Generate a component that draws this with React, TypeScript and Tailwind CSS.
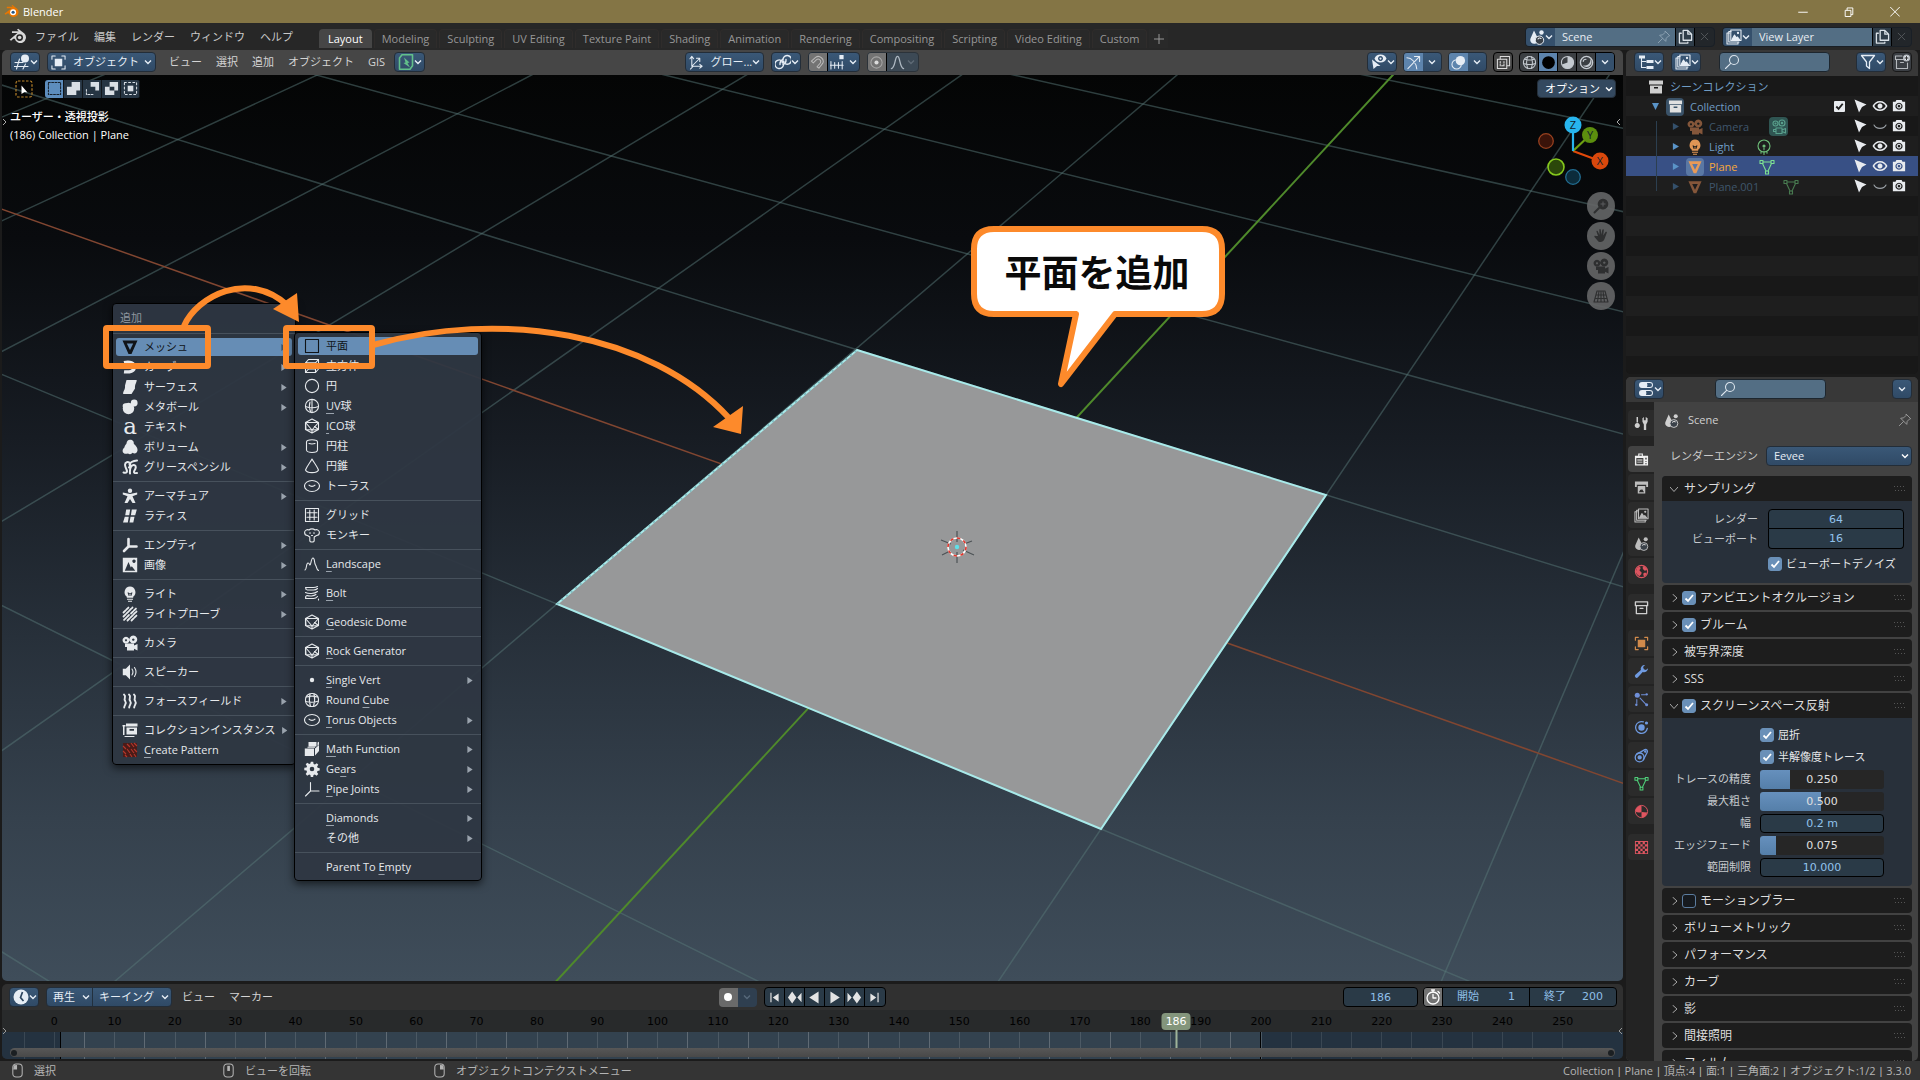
import React from "react";

type Kids = { children?: React.ReactNode };

/* ---------- icons (16 x 16 grid) ---------- */

const STROKE = { fill: "none", stroke: "currentColor", strokeWidth: 1.1, strokeLinejoin: "round", strokeLinecap: "round" } as const;

const ICONS: Record<string, React.ReactNode> = {
  mesh: <path fillRule="evenodd" d="M.5 1.500h15L9.500 15h-3zM4.800 4.500 8 11l3.200-6.500z" />,
  curve: <path d="M2 3.500c6-1.500 10.500.5 10.500 4.500S8 13.500 2 12.800" {...STROKE} strokeWidth={3.200} strokeLinecap="butt" />,
  surface: <path d="M4.500 1h10.200c0 3-2 4-1.700 8.500L9.500 15H1.200c-.5-3 2.300-4 1.800-8.500z" />,
  meta: <g><circle cx="6.500" cy="9.500" r="5.700" /><circle cx="12.200" cy="4" r="3.400" /><circle cx="3.500" cy="7" r="2.800" /></g>,
  text: <text x="8" y="15" fontSize="23" textAnchor="middle" fontFamily="DejaVu Serif, serif">a</text>,
  volume: <path d="M8 .8c3 0 4 2 3.800 4C13 6 15.800 8.500 15.500 11.500c-.5 3-3 3.500-5 2.300-1 1.500-3 1.800-4.500.6C3.500 15.500.6 14.500.6 12c0-2 1.200-3 1.800-3.500C2.800 6 4 5.500 4.500 4.500 4.700 2.500 6 .8 8 .8z" />,
  grease: <path d="M1.500 13.500c3.500 1 4-1 3-3C3 7.500 2 4 4.800 3.200 8 2.500 9 6 7 8.500M15 1.500c-3.500.3-6.500 1.500-7.500 4M8 14.500C7.500 10 9 5.500 12 6c3 .5 1.500 4 .5 5.500-1 1.700-.5 3 2.500 2.500" {...STROKE} strokeWidth={2} />,
  armature: <g><circle cx="8" cy="2.800" r="2.200" /><path d="M.8 4.500 8 6l7.200-1.500v2L10.500 8.200 13.500 15H10.500L8 11l-2.500 4h-3l3-6.800L.8 6.500z" /></g>,
  lattice: <path d="M4.200 1.500h4L7.200 7.200H3.200zM9.800 1.500h5L13.200 7.200H8.900zM2.800 8.800h4l-1 5.700H1zM8.500 8.800h4l-1.200 5.700H7.500z" />,
  empty: <path d="M6.500 2v7.500h8M6.500 9.500 2 14" {...STROKE} strokeWidth={2.600} />,
  image: <path fillRule="evenodd" d="M.8 .8h14.400v14.400H.8zM2.800 13.800h10.500L9.800 9.200l-1 1.200L6.500 5zM12 2.500a1.700 1.700 0 1 0 .01 0z" />,
  light: <g><path fillRule="evenodd" d="M8 .6a5.700 5.700 0 0 1 3.200 10.200v1H4.800v-1A5.700 5.700 0 0 1 8 .6zM5.500 6.500 6.700 10h.8V8h1v2h.8l1.200-3.500H9.500L8 7.500l-1.500-1z" /><path d="M5 12.800h6v1H5zM6 14.700h4v1H6z" /></g>,
  probe: <g><path d="M1.500 6.500 6.500 1.500M1.500 10.500 10.500 1.500M9 7.500 14.500 2M7 9 1.500 14.500M5.500 14.500 14.500 5.500M9.500 14.500 14.500 9.500" {...STROKE} strokeWidth={1.800} strokeDasharray="3 1" /></g>,
  camera: <g><path fillRule="evenodd" d="M4 1.800a3.400 3.400 0 1 0 .01 0zM4 4.300a1 1 0 1 1-.01 0zM11.300.6a3.900 3.900 0 1 0 .01 0zM11.300 3.400a1.200 1.200 0 1 1-.01 0z" /><path d="M3 8.500h9v2l3.500-1.500v6.500l-3.500-1.700v1.700h-7V12H3z" /></g>,
  speaker: <g><path d="M.8 4.800h3L8 .6v14.800L3.800 11.200h-3z" /><path d="M10 5c1.300 2 1.300 4 0 6M12.500 3.500c2 3 2 6 0 9" {...STROKE} /></g>,
  force: <path d="M2 1.500c3 2.500-1 4 1.200 6.500 2 2.500-1 4-1 6.500M7 1.500c3 2.500-1 4 1.200 6.500 2 2.500-1 4-1 6.500M12 1.500c3 2.500-1 4 1.200 6.500 2 2.500-1 4-1 6.500" {...STROKE} strokeWidth={1.900} />,
  instance: <g><path d="M.500 3h3v1.500h-1V13H1V4.500H.500zM4 1.500h11.500v3H4z" /><path fillRule="evenodd" d="M4.500 5.500H15v7H4.500zM7.500 7v1.800H12V7z" /><path d="M3 14.500h9" {...STROKE} /></g>,
  pattern: <g><rect x="1" y="1" width="14" height="14" fill="#4a1b18" /><path d="m1 4 3 3m1-5 3 3m1-4 3 4m0-4 3 3M1 9l3 3m1-5 3 4m1-4 3 4m0-4 3 3M3 13l2 2m3-3 2 3m2-3 2 3" stroke="#b5372b" strokeWidth="1.100" fill="none" /></g>,
  plane: <rect x="1.500" y="1.500" width="13" height="13" {...STROKE} />,
  cube: <path d="M1.500 4.800h10v9.700h-10zM1.500 4.800l3-3.300h10v9.500l-3 3.500M11.500 4.800l3-3.300M4.500 5v6h6M4.500 11l-3 3.500" {...STROKE} />,
  circle: <circle cx="8" cy="8" r="6.600" {...STROKE} />,
  uv: <g {...STROKE}><circle cx="8" cy="8" r="6.600" /><path d="M1.500 8.500c4 1.500 9 1.500 13 0M8 1.500v13M6 4c-1 3-1 6 .5 9.500" /></g>,
  ico: <path d="M8 1 14.500 4.500v7L8 15l-6.500-3.500v-7zM1.500 4.500h13L8 12 1.500 4.500 2 11M14.500 11.500 8 12l-6.500-.5M10.500 8.500l4 3M8 12v3" {...STROKE} />,
  cylinder: <path d="M2.500 4c0-3 11-3 11 0v8c0 3.300-11 3.300-11 0zM5 5.500c2 .6 4 .6 6 0" {...STROKE} />,
  cone: <path d="M8 1C6.500 4 3 8 1.500 12c1.500 3.500 11.500 3.500 13 0C13 8 9.500 4 8 1z" {...STROKE} />,
  torus: <g {...STROKE}><ellipse cx="8" cy="8" rx="7.500" ry="5.500" /><path d="M5 7.200c1.500 1.600 4.500 1.600 6 0" /></g>,
  grid: <path d="M1.500 1.500h13v13h-13zM5.800 3v10M10.200 3v10M3 5.800h10M3 10.200h10" {...STROKE} />,
  monkey: <path d="M5 3C3 2 .6 3.500.6 5.500S2 8.500 3.500 8.500L5.800 10v3.500c0 2 4.400 2 4.400 0V10l2.300-1.500c1.500 0 2.900-1 2.900-3S13 2 11 3C9.500 1.500 6.500 1.500 5 3zM5.500 6h1M9.500 6h1M7.500 8.500h1" {...STROKE} />,
  landscape: <path d="M1 14c2-1 1-7 3-7s1 2 2 2 1-7 3-7 1 5 2.500 7 .5 4 3 5.500" {...STROKE} />,
  bolt: <path d="M1.500 2.500h8c2 0 3-.5 4-1M3.500 5h6c2 0 3-.5 4-1.500M3.500 5c-2.500-.5-2.500-2 0-2.500M1.500 7.500c3 1.500 9 1.500 12-1M1.500 13.500h8c2 0 3-.8 4-2M3 10.500c2.500 1 7 .5 9-1M3 10.500c-2 1-2 2.500 0 3M14.500 14v1" {...STROKE} />,
  dot: <circle cx="8" cy="8" r="2.200" />,
  round: <g {...STROKE}><rect x="1.500" y="1.500" width="13" height="13" rx="6" /><path d="M1.500 9.500c4 1 9 1 13-.5M10 1.700c1 4 1 8-.5 12.800M6 2C5 6 5 10 6.500 14.400M2.500 5c3-1 8-1 11 0" /></g>,
  math: <path fillRule="evenodd" d="M4.500 1h8v4.500h-8zM.8 7.500H10V15H.8zM3.500 5.800h7.500v1H3.500zM11 7.500l4-3.500v6L11 14.500zM13.500 1.500 15 .8v2.700l-1.500 1.500z" />,
  gear: <path fillRule="evenodd" d="M6.800.8h2.400l.4 2.200 1.300.5 1.900-1.300 1.500 1.500-1.200 1.900.5 1.200 2.100.4v2.400l-2.200.4-.5 1.200 1.300 1.900-1.700 1.600-1.800-1.200-1.300.5-.4 2.200H6.800l-.4-2.200-1.300-.5-1.900 1.200-1.500-1.600L3 10.900l-.5-1.300-2.200-.4V6.800l2.200-.4L3 5.200 1.700 3.300l1.600-1.600 1.900 1.300 1.200-.5zM8 5.700A2.300 2.300 0 1 0 8 10.300 2.300 2.300 0 1 0 8 5.700z" />,
  axis: <path d="M6.500 1.500V10H15M6.500 10 1.500 15" {...STROKE} />,
  scene: <g><path d="M5 1.500 8.500 8.500A4 4 0 1 1 1.500 9.500z" /><circle cx="12.500" cy="3.500" r="2.200" /><circle cx="10.500" cy="11.200" r="4.200" fill="#3a4149" stroke="currentColor" /><path d="M9 10c.5-1 2-1.500 3-.5" {...STROKE} /></g>,
  layers: <g {...STROKE}><path d="M3.500 4H1v11h11v-2M5 2.500H2.800v10.500H13" /><rect x="4.800" y="1" width="10.200" height="10.500" /><path d="m6 10.500 2.500-4.500 2 3 1-1 2 2.500z" fill="currentColor" /><circle cx="12" cy="4" r=".6" fill="currentColor" /></g>,
  copy: <path d="M5.500 1.500h5l4 4v6.500h-9zM10.500 1.500v4h4M3.500 4.500h-2v10.500h9v-1" {...STROKE} strokeWidth={1.400} />,
  pin: <path d="m9.500 1.500 5 5-1.500.500-2.500 2.500-.500 3.500-7-7L6.500 5.500 9 3zM6.300 9.700 1.500 14.500" {...STROKE} />,
  search: <g {...STROKE}><circle cx="10" cy="6" r="4.500" /><path d="m6.700 9.300-5.200 5.200" /></g>,
  filter: <path d="M1.500 1.500h13L9.500 8v6.500l-3-2.500V8z" {...STROKE} strokeWidth={1.300} />,
  tree: <g><path d="M1 1.500h6v3H1zM8.500 6h7v3h-7zM8.500 12h7v3h-7z" /><path d="M3.500 4v9.500H8M3.500 7.500H8" {...STROKE} /></g>,
  newcol: <g {...STROKE}><path d="M8 2H1.500v3.500H10M2.500 6v8.500h11V9M6.500 8.500h3" /><circle cx="12.500" cy="4" r="3" fill="#dfe6ee" /><path d="M11 4h3M12.500 2.500v3" stroke="#333" /></g>,
  box: <path fillRule="evenodd" d="M1 1.500h14v4H1zM2 6.500h12v8H2zM6 8v1.500h4V8z" />,
  boxline: <path d="M1.500 2h13v4h-13zM2.500 6v8.500h11V6M6.500 9h3" {...STROKE} strokeWidth={1.400} />,
  pointer: <path d="m2.500 1.500 12 5L10 9l-3 5.500z" />,
  eye: <path fillRule="evenodd" d="M8 3c3.500 0 6 2 7.500 5-1.500 3-4 5-7.500 5S2 11 .5 8C2 5 4.500 3 8 3zm0 1.500C5.500 4.500 3.500 6 2.300 8c1.200 2 3.200 3.500 5.700 3.500S12.500 10 13.700 8C12.500 6 10.500 4.500 8 4.500zM8 5.500a2.500 2.500 0 1 0 .01 0z" />,
  eyeoff: <path d="M2 7c2 4.500 10 4.500 12 0" {...STROKE} />,
  photo: <path fillRule="evenodd" d="M1 3h3l1-2h6l1 2h3v11H1zM8 4.200a4 4 0 1 0 .01 0zM8 5.500a2.700 2.700 0 1 1-.01 0zM8 6.700a1.500 1.500 0 1 0 .01 0z" />,
  vgroup: <g {...STROKE}><path d="M4 3h8M3.500 4.500 7 12M12.500 4.500 9 12" /><path d="M1 1.500h3v3H1zM12 1.500h3v3h-3zM6.500 12h3v3h-3z" /></g>,
  lightdata: <g {...STROKE}><circle cx="8" cy="7" r="6" /><circle cx="8" cy="7" r="1" fill="currentColor" /><path d="M8 9v1.500M8 12v3.500M5 13.200v1M11 13.200v1" /></g>,
  cameradata: <g {...STROKE}><circle cx="4.500" cy="4.500" r="2.500" /><circle cx="11" cy="4" r="3" /><circle cx="4.500" cy="4.500" r=".5" /><circle cx="11" cy="4" r=".7" /><path d="M5 9h6v5.500H5zM11 11l3.500-1.500v4.500L11 12.500M5 10.500H2.500v2H5" /></g>,
  tools: <g><path d="M2.700 1h1.600v6H2.700zM3.500 7.500a2.700 2.700 0 1 1-.01 0zM10.500 9 9 6V2.500L10.500 1v3.500h2V1L14.500 2.500V6L13 9v6h-2.500z" /></g>,
  render: <path fillRule="evenodd" d="M4.500 4V1.500h5V4H15v10.500H1V4zm1.200-1.300V4h2.600V2.700zM2.500 6.500v6.500h7.500V6.500zM3.500 8h5.500v1H3.500zM3.500 10.300h5.500v1H3.500zM12 6v2h1.500V6zM12 9.500v1h1.500v-1zM12 12v1h1.500v-1z" />,
  output: <g><path d="M1 1.500h14v6h-2V5H3v2.500H1z" /><path fillRule="evenodd" d="M4 6.500h8v8H4zM5.200 13h5.600L8.500 9.500 7.500 11l-.700-1z" /></g>,
  world: <g><circle cx="8" cy="8" r="6.500" fill="none" stroke="currentColor" strokeWidth="1.300" /><path d="M3 4.500c2-2 4-1.500 4 0s-1.500 1-1 2.500 2.500 1 2 3-1.500 1.500-2.200 3C4 12 2 10 2 8zM10 2.500c2 .5 3.500 2 4 4-1.500.5-2.500 1-3.500 0s-2-2.500-.5-4zM10.500 9.500c1.500-.5 3 0 3 .5s-1.500 3-2.500 3-1.500-3-.5-3.500z" /></g>,
  object: <g><rect x="4" y="4" width="8" height="8" /><path d="M1.500 4.500v-3h3M11.500 1.500h3v3M14.500 11.500v3h-3M4.500 14.500h-3v-3" {...STROKE} strokeWidth={1.300} /></g>,
  wrench: <path d="M15 4.500a4.300 4.300 0 0 1-5.700 4L4.200 14.200A1.900 1.900 0 0 1 1.500 11.500L7.300 6.500a4.300 4.300 0 0 1 4.500-5.500L9.700 3.300l.8 2.200 2.200.8z" />,
  particles: <g><circle cx="3.500" cy="3.500" r="2.700" /><circle cx="13.500" cy="2.500" r="1.300" /><circle cx="2.500" cy="13.500" r="1.300" /><path d="M8 3h4M3 8v4" {...STROKE} /><path d="m6.500 6.500 6.500 7" {...STROKE} /><circle cx="13.500" cy="13.500" r="1.600" /></g>,
  physics: <g><circle cx="8" cy="8" r="3.400" /><path d="M10 2A6.300 6.300 0 1 0 14.200 9" {...STROKE} strokeWidth={1.400} /><circle cx="13.300" cy="3.200" r="1.700" /></g>,
  constraint: <g {...STROKE} strokeWidth={1.400}><circle cx="6" cy="10" r="4.700" /><circle cx="6" cy="10" r="1.600" fill="currentColor" /><path d="M3 6.500 11.500 1.800c2-.8 3.500 1 2.500 3L10 12.500" /><circle cx="12" cy="3.800" r=".6" fill="currentColor" /></g>,
  material: <g><circle cx="8" cy="8" r="6.500" fill="none" stroke="currentColor" /><path d="M8 1.500A6.500 6.500 0 0 0 1.500 8c2 1.500 4.500 1.500 6.500.5zM8 8.500V14.500A6.500 6.500 0 0 0 14 9z" /></g>,
  texture: <path fillRule="evenodd" d="M1 1h14v14H1zM2 2v2.400h2.400V2zM6.800 2v2.400h2.400V2zM11.600 2v2.400H14V2zM4.400 4.400v2.400h2.400V4.400zM9.200 4.400v2.400h2.400V4.400zM2 6.800v2.400h2.400V6.800zM6.800 6.800v2.400h2.400V6.800zM11.600 6.800v2.400H14V6.800zM4.400 9.200v2.400h2.400V9.200zM9.200 9.200v2.400h2.400V9.200zM2 11.600V14h2.400v-2.400zM6.800 11.600V14h2.400v-2.400zM11.600 11.600V14H14v-2.400z" />,
  view3d: <g><circle cx="11" cy="4.500" r="4" /><path d="M5.500 5 2.500 15M11.500 10 9 15M1 8.500h8M0 12.500h14" {...STROKE} /></g>,
  mode: <g><rect x="4" y="4" width="8" height="8" /><path d="M1 4.500V1h3.500M11.500 1H15v3.500M15 11.500V15h-3.500M4.500 15H1v-3.500" {...STROKE} /></g>,
  gis: <g><path d="M4 .8h10.500v11l-2.500 3.400H1.500V4z" {...STROKE} strokeWidth={1.600} /><path d="M6 3.500 11.500 8.500 9.500 9l2.500 4.500L5.500 9l2-.5z" /></g>,
  orient: <path d="M3 12V2M1 4l2-2.500L5 4M3 12h10.500M11.500 10l2.500 2-2.500 2M3 12l8-8M8 3.500l3.500 0V7M1.500 15l3-3" {...STROKE} />,
  pivot: <g {...STROKE} strokeWidth={1.400}><path d="M8.500 11A4.300 4.300 0 1 1 6 6.300M8 5A4.300 4.300 0 1 1 10.500 9.800" /><path d="M5 10.500a5 5 0 0 1 3-5M11 5.500a5 5 0 0 1-3 5" /><circle cx="8" cy="8" r="1" fill="currentColor" /></g>,
  magnet: <path d="M1.500 6.500 6 2.500c4-3 10 2 7.500 6.500L9.500 14 7.500 12.500 11 8.500c1.500-3-2-5.500-4-3.500L3.500 8.500z" {...STROKE} />,
  snapgrid: <g><path d="M1 7v8M5 8v6M9 8v6M13 7v8M0 11h14" {...STROKE} /><rect x="10" y="0" width="4.500" height="4.500" /></g>,
  prop: <g><circle cx="8" cy="8" r="6" {...STROKE} opacity=".5" /><circle cx="8" cy="8" r="2.200" /></g>,
  falloff: <path d="M1.500 14.500C6 13 5 1.500 8 1.500s2 11.500 6.500 13" {...STROKE} strokeWidth={1.400} />,
  visible: <g><path fillRule="evenodd" d="M9.500.5c3 0 5 1.500 6 4-1 2.500-3 4-6 4s-5-1.500-6-4c1-2.500 3-4 6-4zm0 1.500a2.500 2.500 0 1 0 .01 0zM9.500 3.500a1 1 0 1 1-.01 0z" /><path d="m1 5.500 8.500 6.500H6l-3.500 3z" /></g>,
  gizmo: <path d="M2 14.500 13.500 2.500M9 1.500h5.500V7M1 3c5 0 10 5 10.500 12" {...STROKE} />,
  overlay: <g><circle cx="10" cy="6" r="5" /><circle cx="6" cy="10" r="5" {...STROKE} /></g>,
  xray: <g {...STROKE}><path d="M4.500 4V1.500h10v10H12" /><rect x="1.500" y="4.500" width="10" height="10" /><path d="M4.500 7v4.500h4M8.500 7v4.500" strokeDasharray="1.500 1.500" /></g>,
  wire: <g {...STROKE}><circle cx="8" cy="8" r="6.500" /><path d="M1.500 9c4 1.500 9 1.500 13 0M3 4.500c3 1 7 1 10 0M6 1.800c-1.500 4-1.500 8 0 12.400M10 1.800c1.500 4 1.500 8 0 12.400" /></g>,
  solid: <circle cx="8" cy="8" r="6.800" fill="#000" />,
  matprev: <g><circle cx="8" cy="8" r="6.500" {...STROKE} /><path d="M8 8V1.500a6.500 6.500 0 1 1-6 8.500z" /></g>,
  rendered: <g><circle cx="8" cy="8" r="6.500" {...STROKE} strokeWidth={1.500} /><path d="M12 4a5 5 0 1 1-8 7c3 1 9-1 8-7z" /><path d="M4.500 7c0-1.500 1.500-2.500 3-2.500" {...STROKE} /></g>,
  props: <g><path fillRule="evenodd" d="M4 1h8a3 3 0 0 1 0 6H4A3 3 0 0 1 4 1zm5 1a5 5 0 0 1 0 4h3a2 2 0 0 0 0-4zM4 9h8a3 3 0 0 1 0 6H4a3 3 0 0 1 0-6zm4 1a5 5 0 0 1 0 4h4a2 2 0 0 0 0-4z" /></g>,
  clock: <g><circle cx="8" cy="8" r="7.500" /><path d="M9.500 3 7.500 8.500l3 3.500" fill="none" stroke="#2e465f" strokeWidth="1.700" /></g>,
  stopwatch: <g {...STROKE} strokeWidth={1.300}><circle cx="8" cy="9" r="6" /><path d="M8 5.500V9h3M6.500 1h3M8 1v2M13 2.500l1.500 1.500" /></g>,
  hand: <path d="M5 8 3.500 3.800c-.3-1 .9-1.500 1.300-.5L6.500 7 6.300 2c0-1.200 1.400-1.200 1.500 0L8.300 6.700 9.300 2c.3-1 1.600-.8 1.500.3L10.200 7.500 12.500 4c.6-.8 1.700-.2 1.300.8L11.500 11c-1 3.500-5.500 4-7 1.500L1.500 9c-.5-1 .5-1.500 1.300-.9z" />,
  zoomin: <g><path fillRule="evenodd" d="M10 .8a5.300 5.300 0 1 1-.01 0zM9.500 3.500v2h-2v1h2v2h1v-2h2v-1h-2v-2z" /><path d="m6 10-4.500 4.500" {...STROKE} strokeWidth={2} /></g>,
  persp: <path d="M4 3h8l3 11H1zM3 7h10M2 10.500h12M8 3v11M6 3 4.500 14M10 3l1.500 11" {...STROKE} />,
  blender: <g><path d="M.6 11 8 4.800H2.800V3h6.500L7.500 1.700l1.200-1 5.800 4.500a5.300 5.300 0 1 1-9 4.800H4L2 12z" /><circle cx="10" cy="9" r="3.200" fill="#272727" /><circle cx="10" cy="9" r="1.700" /></g>,
  first: <path d="M2 1h1.700v14H2zM14 2v12L5.500 8z" />,
  prevkey: <path d="M5.500 1.500 10 8l-4.500 6.500L1 8zM15.500 3v10L11 8z" />,
  play: <path d="M3 .5v15L14.500 8z" />,
  mouseL: <g><rect x="3" y="1" width="10" height="14" rx="3.500" {...STROKE} /><path d="M4 2.500 7.500 2v5H3.500z" /></g>,
  mouseM: <g><rect x="3" y="1" width="10" height="14" rx="3.500" {...STROKE} /><rect x="6.700" y="3" width="2.800" height="5.500" /></g>,
  mouseR: <g><rect x="3" y="1" width="10" height="14" rx="3.500" {...STROKE} /><path d="M12 2.500 8.500 2v5h4z" /></g>,
};

function Icon({ n, className = "size-4" }: { n: string; className?: string }) {
  return (
    <svg viewBox="0 0 16 16" className={className + " shrink-0"} fill="currentColor" aria-hidden="true">
      {ICONS[n]}
    </svg>
  );
}

function Chevron({ className = "" }: { className?: string }) {
  return (
    <svg viewBox="0 0 8 8" className={"size-2 shrink-0 " + className} fill="none" stroke="currentColor" strokeWidth="1.400" aria-hidden="true">
      <path d="m1 2.500 3 3 3-3" />
    </svg>
  );
}

const BLUE = "flex items-center h-5 rounded-[4px] border border-[#232d38] bg-linear-to-b from-[#3a5877] to-[#304a66] text-[#e6edf5] ";

function IconDrop({ n, label, iconClass = "size-4" }: { n: string; label: string; iconClass?: string }) {
  return (
    <button aria-label={label} className={BLUE + "w-[30px] shrink-0 justify-between px-[3px]"}>
      <Icon n={n} className={iconClass} />
      <Chevron />
    </button>
  );
}

function Check({ label, on = true, id }: { label: string; on?: boolean; id: string }) {
  return (
    <span className="relative block size-[14px] shrink-0">
      <input
        id={id}
        type="checkbox"
        aria-label={label}
        defaultChecked={on}
        className="peer block size-[14px] appearance-none rounded-[3px] border border-[#5b7c9e] bg-[#161a1f] checked:border-[#6a90b8] checked:bg-[#6a90b8]"
      />
      <svg viewBox="0 0 14 14" className="pointer-events-none absolute inset-0 hidden size-[14px] peer-checked:block" fill="none" stroke="#fff" strokeWidth="1.800" aria-hidden="true">
        <path d="m3.500 7.500 2.500 2.500 5-6" />
      </svg>
    </span>
  );
}

function Bar() {
  return <span className="font-[Liberation_Sans]">|</span>;
}

/* ---------- top ---------- */

function TitleBar() {
  return (
    <header className="flex h-[23px] shrink-0 items-center justify-between bg-[#847545] pr-[20px] pl-1 text-white">
      <div className="flex items-center gap-1">
        <svg viewBox="0 0 16 16" className="size-[15px]" aria-hidden="true">
          <path fill="#ea7600" d="M.5 10.500 8 4.500H3V3h6.500L8 1.700 9 1l5 4a5.200 5.200 0 1 1-8.700 5H3.200L2 11.500z" />
          <circle cx="9.700" cy="8.800" r="3.200" fill="#fff" />
          <circle cx="9.700" cy="8.800" r="1.700" fill="#265787" />
        </svg>
        <h1 className="leading-5">Blender</h1>
      </div>
      <div className="flex items-center gap-9">
        {["M0 5.500h10", "M1 3.500h6v6.500H1zM3 3.500V1h6v7H7", "M0 0l10 10M10 0 0 10"].map((d, i) => (
          <button key={d} aria-label={["最小化", "元に戻す", "閉じる"][i]}>
            <svg viewBox="0 0 10 10.500" className="size-[10px]" fill="none" stroke="#fff" strokeWidth="1">
              <path d={d} />
            </svg>
          </button>
        ))}
      </div>
    </header>
  );
}

const TABS = ["Layout", "Modeling", "Sculpting", "UV Editing", "Texture Paint", "Shading", "Animation", "Rendering", "Compositing", "Scripting", "Video Editing", "Custom"];

function IdField({ icon, value, label, pin }: { icon: string; value: string; label: string; pin?: boolean }) {
  return (
    <div className="flex h-5 items-center overflow-hidden rounded-[4px] border border-[#191f26] bg-[#22262a]">
      <button aria-label={label + "を選択"} className="flex h-full w-[29px] items-center justify-between bg-[#35506c] px-[3px] text-[#e6edf5]">
        <Icon n={icon} />
        <Chevron />
      </button>
      <div className="flex h-full w-[120px] items-center bg-[#536e84] pr-1">
        <input aria-label={label} defaultValue={value} className="w-full min-w-0 bg-transparent pl-[7px] text-[#e8edf2] outline-none" />
        {pin && <Icon n="pin" className="size-[14px] text-[#8ea2b3]" />}
      </div>
      <button aria-label={label + "を追加"} className="flex h-full w-[20px] items-center justify-center border-x border-black bg-[#2f3d49] text-[#dbe2e8]">
        <Icon n="copy" className="size-[15px]" />
      </button>
      <button aria-label={label + "を削除"} className="flex h-full w-[19px] items-center justify-center text-[#56595c]">
        <svg viewBox="0 0 10 10" className="size-[9px]" stroke="currentColor" aria-hidden="true"><path d="m1 1 8 8M9 1 1 9" /></svg>
      </button>
    </div>
  );
}

function TopBar() {
  return (
    <div className="flex h-[27px] shrink-0 items-center justify-between bg-[#272727] pr-2 pl-[9px]">
      <div className="flex h-full items-center">
        <Icon n="blender" className="size-[17px] text-[#d8d8d8]" />
        <nav className="ml-[9px] flex w-[284px] gap-[15px] text-[#c9c9c9]">
          {["ファイル", "編集", "レンダー", "ウィンドウ", "ヘルプ"].map((t) => (
            <button key={t} className="whitespace-nowrap leading-5">{t}</button>
          ))}
        </nav>
        <div className="flex h-full items-end gap-[2px] pb-[2px]" role="tablist">
          {TABS.map((t, i) => (
            <button
              key={t}
              role="tab"
              aria-selected={i === 0}
              className={
                "h-[19px] rounded-t-[4px] leading-[18px] whitespace-nowrap " +
                (i === 0 ? "bg-[#464646] px-[9px] text-white" : "border-x border-t border-[#2f2c2b] bg-[#292929] px-[7px] text-[#979797]")
              }
            >
              {t}
            </button>
          ))}
          <button aria-label="ワークスペースを追加" className="flex h-[19px] w-[19px] items-center justify-center bg-[#292929] text-[#979797]">
            <svg viewBox="0 0 10 10" className="size-[10px]" stroke="currentColor" aria-hidden="true"><path d="M5 0v10M0 5h10" /></svg>
          </button>
        </div>
      </div>
      <div className="flex gap-[7px]">
        <IdField icon="scene" value="Scene" label="シーン" pin />
        <IdField icon="layers" value="View Layer" label="ビューレイヤー" />
      </div>
    </div>
  );
}

/* ---------- 3D viewport ---------- */

function ViewportHeader() {
  return (
    <div className="grid h-[25px] shrink-0 grid-cols-[1fr_auto_1fr] items-center rounded-t-[5px] bg-[#464646] pr-2 pb-px pl-2 text-[#d4d4d4]">
      <div className="flex items-center">
        <IconDrop n="view3d" label="エディタータイプ" />
        <button className={BLUE + "ml-[7px] w-[109px] px-[3px]"}>
          <Icon n="mode" className="size-[15px]" />
          <span className="ml-[7px] flex-1 text-left">オブジェクト</span>
          <Chevron />
        </button>
        <div className="ml-[13px] flex gap-[14px]">
          {["ビュー", "選択", "追加", "オブジェクト", "GIS"].map((t) => (
            <button key={t} className="whitespace-nowrap leading-5">{t}</button>
          ))}
        </div>
        <button aria-label="GISメニュー" className={BLUE + "ml-[9px] w-[31px] justify-between px-[3px]"}>
          <Icon n="gis" className="size-4 text-[#62c08a]" />
          <Chevron />
        </button>
      </div>
      <div className="mr-[22px] flex items-center gap-[7px]">
        <button className={BLUE + "w-[79px] px-[3px]"}>
          <Icon n="orient" className="size-[15px]" />
          <span className="ml-[7px] flex-1 text-left whitespace-nowrap">グロー...</span>
          <Chevron />
        </button>
        <IconDrop n="pivot" label="ピボットポイント" />
        <div className={BLUE + "w-[52px] overflow-hidden"}>
          <button aria-label="スナップ" className="flex h-full w-[19px] items-center justify-center border-r border-black bg-[#737373] text-[#b9b9b9]"><Icon n="magnet" className="size-[15px]" /></button>
          <button aria-label="スナップ先" className="flex flex-1 items-center justify-between px-[2px]"><Icon n="snapgrid" className="size-[15px]" /><Chevron /></button>
        </div>
        <div className="flex h-5 w-[52px] items-center overflow-hidden rounded-[4px] border border-[#2c333a] bg-[#3c4955]">
          <button aria-label="プロポーショナル編集" className="flex h-full w-[19px] items-center justify-center border-r border-black bg-[#737373] text-[#dcdcdc]"><Icon n="prop" className="size-[15px]" /></button>
          <button aria-label="減衰タイプ" className="flex flex-1 items-center justify-between px-[3px] text-[#aeb8c2]"><Icon n="falloff" className="size-[15px]" /><Chevron className="opacity-30" /></button>
        </div>
      </div>
      <div className="flex items-center justify-end gap-[6px]">
        <IconDrop n="visible" label="表示対象" />
        {[["gizmo", "ギズモ"], ["overlay", "オーバーレイ"]].map(([n, label]) => (
          <div key={n} className={BLUE + "w-[39px] overflow-hidden"}>
            <button aria-label={label} className="flex h-full w-[19px] items-center justify-center bg-[#5d84ad]"><Icon n={n} className="size-[15px]" /></button>
            <button aria-label={label + "メニュー"} className="flex h-full flex-1 items-center justify-center"><Chevron /></button>
          </div>
        ))}
        <button aria-label="透過表示" className="flex size-5 items-center justify-center rounded-[4px] border border-black bg-[#454545] text-[#dcdcdc]"><Icon n="xray" className="size-[15px]" /></button>
        <div className="flex h-5 w-[96px] items-center overflow-hidden rounded-[4px] border border-black bg-[#3b3f43] text-[#c4cad0]">
          {["wire", "solid", "matprev", "rendered"].map((n) => (
            <button key={n} aria-label={n} className={"flex h-full w-[19px] items-center justify-center border-r border-black " + (n === "solid" ? "bg-[#5d84ad]" : "")}><Icon n={n} className="size-[15px]" /></button>
          ))}
          <button aria-label="シェーディング" className="flex h-full flex-1 items-center justify-center bg-[#35506c] text-[#e6edf5]"><Chevron /></button>
        </div>
      </div>
    </div>
  );
}

type Pt = [number, number];

/* Image positions of the floor points (-1,-1), (1,-1), (1,4) and (-1,4). */
const FLOOR: Pt[] = [[557, 604], [1101, 829], [1531, 191], [1143, 104]];

/* Projects a floor point (x, y) onto the view. */
function project(x: number, y: number): Pt {
  const [[x0, y0], [x1, y1], [x2, y2], [x3, y3]] = FLOOR;
  const dx1 = x1 - x2, dx2 = x3 - x2, dx3 = x0 - x1 + x2 - x3;
  const dy1 = y1 - y2, dy2 = y3 - y2, dy3 = y0 - y1 + y2 - y3;
  const det = dx1 * dy2 - dx2 * dy1;
  const g = (dx3 * dy2 - dx2 * dy3) / det;
  const h = (dx1 * dy3 - dx3 * dy1) / det;
  const u = (x + 1) / 2, v = (y + 1) / 5;
  const w = g * u + h * v + 1;
  return [
    ((x1 - x0 + g * x1) * u + (x3 - x0 + h * x3) * v + x0) / w,
    ((y1 - y0 + g * y1) * u + (y3 - y0 + h * y3) * v + y0) / w,
  ];
}

function FloorLine({ a, b, stroke, width = 1.5 }: { a: Pt; b: Pt; stroke: string; width?: number }) {
  const len = Math.hypot(b[0] - a[0], b[1] - a[1]);
  const dx = ((b[0] - a[0]) / len) * 4000, dy = ((b[1] - a[1]) / len) * 4000;
  return <line x1={a[0] - dx} y1={a[1] - dy} x2={a[0] + dx} y2={a[1] + dy} stroke={stroke} strokeWidth={width} />;
}

const STEPS = Array.from({ length: 21 }, (_, i) => i - 10);

function Scene3D() {
  return (
    <svg viewBox="2 75 1621 906" preserveAspectRatio="xMidYMid slice" className="absolute inset-0 h-full w-full" aria-hidden="true">
      {STEPS.filter((n) => n !== 0).map((n) => (
        <g key={n}>
          <FloorLine a={project(n, -1)} b={project(n, 1)} stroke="rgba(88,120,120,0.5)" />
          <FloorLine a={project(-1, n)} b={project(1, n)} stroke="rgba(88,120,120,0.5)" />
        </g>
      ))}
      <FloorLine a={project(-1, 0)} b={project(1, 0)} stroke="#814631" />
      <FloorLine a={project(0, -1)} b={project(0, 1)} stroke="#4f8a2b" width={2} />
      <polygon points="857,350 1326,495 1101,829 557,604" fill="#979899" stroke="#a9eaea" strokeWidth="2" />
      <path d="M557 604 857 350" stroke="#7fbcc0" strokeWidth="2" strokeDasharray="2 4" />
      <g fill="none">
        <path d="M957 531v11M957 552v11M941 540l10 4M963 550l11 5M972 541l-8 3M950 551l-8 4" stroke="#4d5356" strokeWidth="1.200" />
        <circle cx="957" cy="547" r="9" stroke="#fff" strokeWidth="1.600" />
        <circle cx="957" cy="547" r="9" stroke="#e0362c" strokeWidth="1.600" strokeDasharray="3.500 3.500" />
        <circle cx="957" cy="547" r="2.200" fill="#5fe0e8" />
      </g>
    </svg>
  );
}

function Gizmo() {
  const t = { fontSize: 11, textAnchor: "middle", fill: "#10222c", fontFamily: "Open Sans, sans-serif" } as const;
  return (
    <svg viewBox="1536 112 76 78" className="h-[78px] w-[76px]" aria-label="ナビゲーションギズモ">
      <circle cx="1546" cy="141" r="7.300" fill="#3a1309" stroke="#96401f" strokeWidth="1.300" />
      <circle cx="1573" cy="177" r="7.300" fill="#0c2c3b" stroke="#226d92" strokeWidth="1.300" />
      <circle cx="1556" cy="167" r="8" fill="#2b470a" stroke="#86c91d" strokeWidth="1.600" />
      <path d="M1573 151 1600 161" stroke="#e0480a" strokeWidth="2.200" />
      <path d="M1573 151 1590 135" stroke="#6d9f12" strokeWidth="2.200" />
      <path d="M1573 151V125" stroke="#27b5ee" strokeWidth="2.200" />
      <circle cx="1590" cy="135" r="8" fill="#5c8f0e" />
      <circle cx="1600" cy="161" r="8.500" fill="#d9480c" />
      <circle cx="1573" cy="125" r="8.500" fill="#27b5ee" />
      <text x="1573" y="129" {...t}>Z</text>
      <text x="1590" y="139" {...t}>Y</text>
      <text x="1600" y="165" {...t}>X</text>
    </svg>
  );
}

/* "!" marks the letter that carries the shortcut underline; null is a separator. */
type Item = { t: string; i?: string; sub?: boolean; on?: boolean } | null;

const ADD_MENU: Item[] = [
  { t: "メッシュ", i: "mesh", sub: true, on: true },
  { t: "カーブ", i: "curve", sub: true },
  { t: "サーフェス", i: "surface", sub: true },
  { t: "メタボール", i: "meta", sub: true },
  { t: "テキスト", i: "text" },
  { t: "ボリューム", i: "volume", sub: true },
  { t: "グリースペンシル", i: "grease", sub: true },
  null,
  { t: "アーマチュア", i: "armature", sub: true },
  { t: "ラティス", i: "lattice" },
  null,
  { t: "エンプティ", i: "empty", sub: true },
  { t: "画像", i: "image", sub: true },
  null,
  { t: "ライト", i: "light", sub: true },
  { t: "ライトプローブ", i: "probe", sub: true },
  null,
  { t: "カメラ", i: "camera" },
  null,
  { t: "スピーカー", i: "speaker" },
  null,
  { t: "フォースフィールド", i: "force", sub: true },
  null,
  { t: "コレクションインスタンス", i: "instance", sub: true },
  { t: "!Create Pattern", i: "pattern" },
];

const MESH_MENU: Item[] = [
  { t: "平面", i: "plane", on: true },
  { t: "立方体", i: "cube" },
  { t: "円", i: "circle" },
  { t: "!UV球", i: "uv" },
  { t: "!ICO球", i: "ico" },
  { t: "円柱", i: "cylinder" },
  { t: "円錐", i: "cone" },
  { t: "トーラス", i: "torus" },
  null,
  { t: "グリッド", i: "grid" },
  { t: "モンキー", i: "monkey" },
  null,
  { t: "!Landscape", i: "landscape" },
  null,
  { t: "!Bolt", i: "bolt" },
  null,
  { t: "!Geodesic Dome", i: "ico" },
  null,
  { t: "!Rock Generator", i: "ico" },
  null,
  { t: "!Single Vert", i: "dot", sub: true },
  { t: "Round !Cube", i: "round" },
  { t: "!Torus Objects", i: "torus", sub: true },
  null,
  { t: "!Math Function", i: "math", sub: true },
  { t: "Ge!ars", i: "gear", sub: true },
  { t: "!Pipe Joints", i: "axis", sub: true },
  null,
  { t: "!Diamonds", sub: true },
  { t: "その他", sub: true },
  null,
  { t: "Parent To !Empty" },
];

function MenuLabel({ t }: { t: string }) {
  const k = t.indexOf("!");
  if (k < 0) return <>{t}</>;
  return (
    <>
      {t.slice(0, k)}
      <span className="underline decoration-[#9aa3ad] underline-offset-[3px]">{t[k + 1]}</span>
      {t.slice(k + 2)}
    </>
  );
}

function MenuRows({ items }: { items: Item[] }) {
  return (
    <>
      {items.map((it, n) =>
        it === null ? (
          <hr key={n} className="my-1 border-t border-[#47515c]" />
        ) : (
          <button
            key={n}
            role="menuitem"
            className={
              "mx-[3px] my-px flex h-[18px] items-center gap-[6px] rounded-[3px] pr-[5px] pl-[6px] text-left whitespace-nowrap " +
              (it.on ? "bg-[#668db5] text-[#101418]" : "text-[#e6e9ec]")
            }
          >
            {it.i ? <Icon n={it.i} className="size-4" /> : <span className="size-4" />}
            <span className="flex-1"><MenuLabel t={it.t} /></span>
            {it.sub && (
              <svg viewBox="0 0 6 8" className={"h-[7px] w-[6px] " + (it.on ? "text-[#3b536c]" : "text-[#9aa3ad]")} fill="currentColor" aria-hidden="true">
                <path d="M0 0v8l6-4z" />
              </svg>
            )}
          </button>
        )
      )}
    </>
  );
}

const MENU = "absolute flex flex-col rounded-[4px] border border-black bg-[#2e3742]/95 shadow-[0_3px_8px_rgba(0,0,0,0.6)] ";

function Annotations() {
  return (
    <svg viewBox="2 75 1621 906" preserveAspectRatio="xMidYMid slice" className="pointer-events-none absolute inset-0 h-full w-full">
      <g fill="none" stroke="#fd8a2b" strokeWidth="6">
        <rect x="106" y="328" width="102" height="38" rx="1" />
        <rect x="286" y="328" width="86" height="38" rx="1" />
        <path d="M184 326C197 296 248 270 287 305" />
        <path d="M373 345C500 309 650 332 729 418" />
      </g>
      <path d="M299 322 297 293 273 309zM741 434 743 406 713 427z" fill="#fd8a2b" />
      <path d="M994 229h208q20 0 20 20v45q0 20-20 20h-87l-54 70 15-70h-82q-20 0-20-20v-45q0-20 20-20z" fill="#fff" stroke="#fd8a2b" strokeWidth="6" strokeLinejoin="round" />
      <text x="1097" y="287" fontSize="37" fontWeight="700" textAnchor="middle" fill="#0a0a0a" fontFamily="Noto Sans CJK JP, sans-serif">平面を追加</text>
    </svg>
  );
}

function SelectModes() {
  const shapes = [
    <rect key="a" x="1.500" y="1.500" width="13" height="13" {...STROKE} stroke="#16202b" strokeDasharray="2 1.500" />,
    <path key="b" d="M6 1h9v9h-4v5H1V6h5z" />,
    <g key="c"><path d="M6 1h9v9h-4V6H6z" /><path d="M8.500 14.500h-7v-7" {...STROKE} strokeDasharray="2 1.500" /></g>,
    <path key="d" fillRule="evenodd" d="M6 1h9v9h-4v5H1V6h5zM6 6v4h5V6z" />,
    <g key="e"><rect x="5" y="5" width="6" height="6" /><rect x="1.500" y="1.500" width="13" height="13" {...STROKE} strokeDasharray="2 2.500" /></g>,
  ];
  return (
    <div className="flex overflow-hidden rounded-[3px]">
      {shapes.map((s, i) => (
        <button key={i} aria-label={"選択モード " + (i + 1)} className={"flex h-[18px] w-[19px] items-center justify-center border-r border-[#11161b] text-[#d9dfe5] " + (i === 0 ? "bg-[#5d8dbd]" : "bg-[#263543]")}>
          <svg viewBox="0 0 16 16" className="size-[15px]" fill="currentColor">{s}</svg>
        </button>
      ))}
    </div>
  );
}

function Viewport() {
  return (
    <section className="flex min-h-0 flex-1 flex-col">
      <ViewportHeader />
      <div className="relative min-h-0 flex-1 overflow-hidden rounded-b-[5px] bg-[linear-gradient(to_bottom,#040505_0%,#090b0e_18%,#171c23_40%,#27303a_62%,#35414d_82%,#3f4d5a_100%)]">
        <Scene3D />
        <div className="relative flex justify-between pt-1 pr-[7px] pl-[13px]">
          <div className="flex items-center gap-3">
            <button aria-label="ボックス選択" className="size-[18px] text-white">
              <svg viewBox="0 0 18 18" aria-hidden="true"><rect x="1" y="1" width="16" height="16" rx="2" fill="none" stroke="#b9832a" strokeWidth="1.200" strokeDasharray="2.500 1.500" /><path d="m6.500 5.500 6 7-3-.5-3 2z" fill="#fff" /></svg>
            </button>
            <SelectModes />
          </div>
          <button className="flex h-[19px] w-[79px] items-center justify-between rounded-[4px] border border-[#25303b] bg-[#34495f] px-[7px] pr-[2px] text-white">
            オプション
            <Chevron />
          </button>
        </div>
        <p className="relative mt-[10px] ml-2 leading-[18px] font-medium text-white text-shadow-[0_0_2px_#000]">
          ユーザー・透視投影
          <br />
          (186) Collection | Plane
        </p>
        <div className="absolute top-[37px] right-[11px]"><Gizmo /></div>
        <div className="absolute top-[117px] right-2 flex flex-col gap-[2px]">
          {[["zoomin", "ズーム"], ["hand", "移動"], ["camera", "カメラ視点"], ["persp", "透視投影"]].map(([n, label]) => (
            <button key={n} aria-label={label} className="flex size-7 items-center justify-center rounded-full bg-[#656667]/90 text-[#2e2f30]"><Icon n={n} /></button>
          ))}
        </div>
        <svg viewBox="0 0 5 8" className="absolute top-[43px] left-0 h-2 w-[5px]" fill="none" stroke="#aaa"><path d="m1 1 3 3-3 3" /></svg>
        <svg viewBox="0 0 5 8" className="absolute top-[43px] right-[2px] h-2 w-[5px]" fill="none" stroke="#aaa"><path d="M4 1 1 4l3 3" /></svg>

        <div role="menu" aria-label="追加" className={MENU + "top-[228px] left-[110px] w-[184px] pb-[4px]"}>
          <div className="px-[7px] pt-1 leading-5 text-[#8f969e]">追加</div>
          <hr className="mt-[5px] mb-[3px] border-t border-[#47515c]" />
          <MenuRows items={ADD_MENU} />
        </div>
        <div role="menu" aria-label="メッシュ" className={MENU + "top-[257px] left-[292px] w-[188px] py-[3px]"}>
          <MenuRows items={MESH_MENU} />
        </div>
        <Annotations />
      </div>
    </section>
  );
}

/* ---------- timeline ---------- */

const FRAME0 = 52, TOTAL = 1621, STEP = 6.033;
const at = (f: number) => ((FRAME0 + f * STEP) / TOTAL) * 100 + "%";

function Timeline() {
  return (
    <section className="flex shrink-0 flex-col overflow-hidden rounded-[5px]">
      <div className="grid h-[26px] grid-cols-[1fr_auto_1fr] items-center bg-[#303030] pr-[6px] pl-[7px] text-[#d4d4d4]">
        <div className="flex items-center">
          <IconDrop n="clock" label="エディタータイプ" />
          <div className={BLUE + "ml-[7px] w-[126px]"}>
            <button className="flex h-full w-[46px] items-center justify-between border-r border-[#22303e] pr-[2px] pl-[6px]">再生<Chevron /></button>
            <button className="flex flex-1 items-center justify-between pr-[2px] pl-[6px]">キーイング<Chevron /></button>
          </div>
          <button className="ml-[10px]">ビュー</button>
          <button className="ml-[14px]">マーカー</button>
        </div>
        <div className="mr-[22px] flex items-center">
          <button aria-label="自動キー挿入" className="flex h-[19px] w-[19px] items-center justify-center rounded-l-[4px] bg-[#6a6a6a] text-white"><span className="size-2 rounded-full bg-white" /></button>
          <button aria-label="自動キー設定" className="flex h-[19px] w-[19px] items-center justify-center rounded-r-[4px] bg-[#2f3f50] text-[#56687a]"><Chevron /></button>
          <div className="ml-[7px] flex h-5 overflow-hidden rounded-[4px] border border-black bg-[#2a3a47] text-[#e4e4e4]">
            {["first", "prevkey", "play", "play", "prevkey", "first"].map((n, i) => (
              <button key={i} aria-label={["先頭", "前のキー", "逆再生", "再生", "次のキー", "末尾"][i]} className={"flex w-5 items-center justify-center " + (i < 5 ? "border-r border-black" : "")}>
                <Icon n={n} className={(n === "play" ? "size-[13px] " : n === "first" ? "size-[11px] " : "size-[15px] ") + (i === 2 || i > 3 ? "-scale-x-100" : "")} />
              </button>
            ))}
          </div>
        </div>
        <div className="flex items-center justify-end gap-[5px] font-[DejaVu_Sans,Noto_Sans_CJK_JP] text-[#8fbfe8]">
          <input aria-label="現在のフレーム" defaultValue="186" className="h-5 w-[75px] rounded-[4px] border border-black bg-[#2a3a47] text-center outline-none" />
          <div className="flex h-5 items-center overflow-hidden rounded-[4px] border border-black bg-[#2a3a47]">
            <button aria-label="プレビュー範囲" className="flex h-full w-[18px] items-center justify-center bg-[#737373] text-white"><Icon n="stopwatch" /></button>
            <label className="flex h-full w-[88px] items-center border-r border-l border-black px-[14px] whitespace-nowrap">開始<input defaultValue="1" className="w-full min-w-0 bg-transparent text-right outline-none" /></label>
            <label className="flex h-full w-[86px] items-center pr-[13px] pl-[14px] whitespace-nowrap">終了<input defaultValue="200" className="w-full min-w-0 bg-transparent text-right outline-none" /></label>
          </div>
        </div>
      </div>
      <div className="relative bg-[#282a2b]">
        <div className="flex h-[22px] items-center pt-px pr-[30px] pl-[22px] font-[DejaVu_Sans] text-black">
          {Array.from({ length: 26 }, (_, i) => (
            <span key={i} className="flex-1 text-center">{i * 10}</span>
          ))}
        </div>
        <div className="relative h-[27px] bg-[#243240]">
          <div className="absolute inset-y-0 border-x border-black bg-[#33424f]" style={{ left: at(1), right: (1 - (FRAME0 + 200 * STEP) / TOTAL) * 100 + "%" }} />
          {Array.from({ length: 52 }, (_, i) => (i - 1) * 5).map((f) => (
            <span key={f} className={"absolute inset-y-0 w-px " + (f < 1 || f > 200 ? "bg-[#3a4753]" : f % 10 ? "bg-[#5f6a74]" : "bg-[#4c5964]")} style={{ left: at(f) }} />
          ))}
          <div className="absolute inset-x-2 top-4 flex h-[9px] items-center justify-between rounded-full bg-linear-to-b from-[#575757] to-[#494949] px-px">
            <span className="size-[6px] rounded-full bg-[#1b1f22]" />
            <span className="size-[6px] rounded-full bg-[#1b1f22]" />
          </div>
        </div>
        <div className="absolute top-[3px] bottom-[11px] flex -translate-x-1/2 flex-col items-center" style={{ left: at(186) }}>
          <span className="rounded-[4px] bg-[#83957c] px-1 font-[DejaVu_Sans] leading-[17px] text-white">186</span>
          <span className="w-[2px] flex-1 bg-[#9fb39a]" />
        </div>
        <svg viewBox="0 0 5 8" className="absolute top-[17px] left-0 h-2 w-[5px]" fill="none" stroke="#999"><path d="m1 1 3 3-3 3" /></svg>
        <svg viewBox="0 0 5 8" className="absolute top-[17px] right-0 h-2 w-[5px]" fill="none" stroke="#999"><path d="M4 1 1 4l3 3" /></svg>
      </div>
    </section>
  );
}

/* ---------- outliner ---------- */

const FLAG_LABELS: Record<string, string> = { pointer: "選択可能", eye: "ビューポートで隠す", eyeoff: "ビューポートで表示", photo: "レンダーで有効" };

function OutlinerRow({ children, sel, odd, depth, flags }: Kids & { sel?: boolean; odd: boolean; depth: number; flags?: string[] }) {
  return (
    <div className={"flex h-5 shrink-0 items-center justify-between pt-px pr-[12px] " + (sel ? "bg-[#385085]" : odd ? "bg-[#1e1e1e]" : "bg-[#181818]")}>
      <div className={"flex items-center " + ["pl-[20px]", "pl-[24px]", "pl-[44px]"][depth]}>{children}</div>
      {flags && (
        <div className="flex items-center gap-1 pb-px text-[#e8ebef]">
          {flags.map((f) =>
            f === "check" ? (
              <span key={f} className="relative mr-[3px] block size-[11px]">
                <input type="checkbox" aria-label="ビューレイヤーに含める" defaultChecked className="block size-[11px] appearance-none rounded-[1px] bg-[#e8ebef]" />
                <svg viewBox="0 0 12 12" className="pointer-events-none absolute inset-0" fill="none" stroke="#1e1e1e" strokeWidth="2"><path d="m2.500 6 2.500 2.500 4.500-5.500" /></svg>
              </span>
            ) : (
              <button key={f} aria-label={FLAG_LABELS[f]} className={f === "eyeoff" ? "text-[#9aa0a6]" : ""}><Icon n={f} className={f === "photo" ? "size-[14px]" : "size-4"} /></button>
            )
          )}
        </div>
      )}
    </div>
  );
}

function Tri({ open, dim }: { open?: boolean; dim?: boolean }) {
  return (
    <svg viewBox="0 0 8 8" className={"mr-[6px] ml-[2px] size-[7px] " + (dim ? "text-[#34506b]" : "text-[#5a94c8]")} fill="currentColor" aria-hidden="true">
      <path d={open ? "M0 0h8L4 8z" : "M1 0v8l7-4z"} />
    </svg>
  );
}

function Outliner() {
  return (
    <section className="flex min-h-0 flex-[324] flex-col overflow-hidden rounded-[5px] bg-[#181818]">
      <div className="flex h-[26px] shrink-0 items-center bg-[#383838] pr-[6px] pb-[2px] pl-2">
        <IconDrop n="tree" label="エディタータイプ" />
        <div className="ml-[7px]"><IconDrop n="layers" label="表示モード" /></div>
        <label className="ml-[18px] flex h-5 w-[111px] items-center rounded-[4px] border border-[#1d262e] bg-[#536e84] pl-1 text-[#dbe4ec]">
          <Icon n="search" />
          <input aria-label="検索" className="w-full min-w-0 bg-transparent outline-none" />
        </label>
        <div className="ml-auto flex gap-[6px]">
          <IconDrop n="filter" label="フィルター" />
          <button aria-label="新規コレクション" className="flex size-5 items-center justify-center rounded-[4px] border border-[#191919] bg-[#3b3f44] text-[#b5b9bd]"><Icon n="newcol" /></button>
        </div>
      </div>
      <div className="relative flex min-h-0 flex-1 flex-col overflow-hidden text-[#6f9cc4]">
        <OutlinerRow odd={false} depth={0}><Icon n="box" className="mr-[6px] ml-[2px] size-4 text-[#cfcfcf]" />シーンコレクション</OutlinerRow>
        <OutlinerRow odd depth={1} flags={["check", "pointer", "eye", "photo"]}>
          <Tri open />
          <span className="mx-px flex size-[18px] items-center justify-center rounded-[4px] bg-[#3a5268] text-[#e0e0e0]"><Icon n="box" className="size-[15px]" /></span>
          <span className="ml-[5px]">Collection</span>
        </OutlinerRow>
        <OutlinerRow odd={false} depth={2} flags={["pointer", "eyeoff", "photo"]}>
          <Tri dim />
          <Icon n="camera" className="mr-[6px] ml-[2px] size-4 text-[#84563a]" />
          <span className="w-[60px] text-[#3f566c]">Camera</span>
          <span className="flex size-[19px] items-center justify-center rounded-[4px] bg-[#2f5552] text-[#59a08c]"><Icon n="cameradata" /></span>
        </OutlinerRow>
        <OutlinerRow odd depth={2} flags={["pointer", "eye", "photo"]}>
          <Tri />
          <Icon n="light" className="mr-[6px] ml-[2px] size-4 text-[#e09555]" />
          <span className="w-[47px]">Light</span>
          <Icon n="lightdata" className="size-4 text-[#6fc17a]" />
        </OutlinerRow>
        <OutlinerRow odd={false} sel depth={2} flags={["pointer", "eye", "photo"]}>
          <Tri />
          <span className="mr-[5px] ml-px flex size-[18px] items-center justify-center rounded-[4px] bg-[#5a78a4] text-[#e89a58]"><Icon n="mesh" className="size-[14px]" /></span>
          <span className="w-[50px] text-[#f7a93b]">Plane</span>
          <Icon n="vgroup" className="size-4 text-[#7cdf93]" />
        </OutlinerRow>
        <OutlinerRow odd depth={2} flags={["pointer", "eyeoff", "photo"]}>
          <Tri dim />
          <Icon n="mesh" className="mr-[7px] ml-[3px] size-[14px] text-[#84563a]" />
          <span className="w-[74px] text-[#3f566c]">Plane.001</span>
          <Icon n="vgroup" className="size-4 text-[#487a50]" />
        </OutlinerRow>
        {Array.from({ length: 9 }, (_, i) => (
          <OutlinerRow key={i} odd={i % 2 === 1} depth={0} />
        ))}
        <span className="absolute top-[45px] left-[30px] h-[70px] w-px bg-[#2c3f50]" />
      </div>
    </section>
  );
}

/* ---------- properties ---------- */

const TAB_GROUPS: [string, string][][] = [
  [["tools", "text-[#cfcfcf]"]],
  [["render", "text-[#f0f0f0]"], ["output", "text-[#bdbdbd]"], ["layers", "text-[#bdbdbd]"], ["scene", "text-[#bdbdbd]"], ["world", "text-[#dc5560]"]],
  [["boxline", "text-[#cfcfcf]"]],
  [["object", "text-[#d18a4b]"], ["wrench", "text-[#6f9ae0]"], ["particles", "text-[#6f8fd8]"], ["physics", "text-[#6f9ae0]"], ["constraint", "text-[#6f9ae0]"], ["vgroup", "text-[#4fd07a]"], ["material", "text-[#e05560]"]],
  [["texture", "text-[#dc5560]"]],
];

function Panel({ title, open, check, children }: Kids & { title: string; open?: boolean; check?: boolean }) {
  return (
    <section className="shrink-0 overflow-hidden rounded-[4px] bg-[#28303a]">
      <div className="flex h-[25px] items-center bg-[#1d1d1d] pr-[6px] pl-2 text-xs text-[#dedede]">
        <button aria-label={title + "を開閉"} className="mr-1 flex size-[8px] items-center text-[#a8a8a8]">
          <svg viewBox="0 0 8 8" className="size-2" fill="none" stroke="currentColor"><path d={open ? "M0 2l4 4.500L8 2" : "M2.500 0 7 4 2.500 8"} /></svg>
        </button>
        {check === undefined ? (
          <h2 className="ml-[2px] leading-6">{title}</h2>
        ) : (
          <label className="flex items-center gap-1"><Check id={title} label={title} on={check} /><span className="leading-6">{title}</span></label>
        )}
        <svg viewBox="0 0 12 6" className="ml-auto h-[6px] w-[12px] fill-[#555]" aria-hidden="true">
          {[0, 3, 6, 9].map((x) => (<g key={x}><rect x={x} y="0" width="1" height="1" /><rect x={x + 1} y="4" width="1" height="1" /></g>))}
        </svg>
      </div>
      {children}
    </section>
  );
}

function Field({ label, value, fill }: { label: string; value: string; fill?: number }) {
  return (
    <label className="flex h-[22px] items-center">
      <span className="w-[89px] shrink-0 text-right whitespace-nowrap text-[#c6cace]">{label}</span>
      <span className="relative ml-[9px] block h-[19px] w-[124px] font-[DejaVu_Sans]">
        {fill === undefined ? (
          <input defaultValue={value} className="block h-full w-full rounded-[4px] border border-black bg-[#2a3a47] text-center text-[#92c3ec] outline-none" />
        ) : (
          <>
            <span className="block h-full overflow-hidden rounded-[3px] bg-[#262626]">
              <span className="block h-full bg-linear-to-b from-[#6690bd] to-[#557fa9]" style={{ width: fill * 100 + "%" }} />
            </span>
            <input type="range" min="0" max="1" step="0.001" defaultValue={value} className="absolute inset-0 h-full w-full opacity-0" />
            <span className="pointer-events-none absolute inset-0 text-center leading-[19px] text-[#e0e0e0]">{value}</span>
          </>
        )}
      </span>
    </label>
  );
}

function Properties() {
  return (
    <section className="flex min-h-0 flex-[684] flex-col overflow-hidden rounded-[5px] bg-[#424242]">
      <div className="flex h-[25px] shrink-0 items-center bg-[#383838] pr-[6px] pb-[2px] pl-2">
        <IconDrop n="props" label="エディタータイプ" />
        <label className="ml-[51px] flex h-5 w-[111px] items-center rounded-[4px] border border-[#1d262e] bg-[#536e84] pl-1 text-[#dbe4ec]">
          <Icon n="search" />
          <input aria-label="プロパティを検索" className="w-full min-w-0 bg-transparent outline-none" />
        </label>
        <button aria-label="オプション" className={BLUE + "ml-auto w-5 justify-center"}><Chevron /></button>
      </div>
      <div className="flex min-h-0 flex-1">
        <nav className="flex w-[28px] shrink-0 flex-col gap-[10px] bg-[#232323] pt-2 pl-[2px]">
          {TAB_GROUPS.map((g, k) => (
            <div key={k} className="flex flex-col gap-[2px]">
              {g.map(([n, c]) => (
                <button key={n} aria-label={n} className={"flex h-[26px] items-center justify-center rounded-l-[4px] " + (n === "render" ? "bg-[#424242] " : "bg-[#2b2b2b] ") + c}><Icon n={n} className="size-[15px]" /></button>
              ))}
            </div>
          ))}
        </nav>
        <div className="flex min-w-0 flex-1 flex-col overflow-hidden pr-[6px] pl-2">
          <div className="flex h-9 shrink-0 items-center gap-[9px] pl-[2px] text-[#d0d0d0]">
            <Icon n="scene" className="size-[15px]" />
            <span className="flex-1">Scene</span>
            <Icon n="pin" className="size-[14px] text-[#9a9a9a]" />
          </div>
          <label className="flex h-9 shrink-0 items-center justify-between text-[#cacaca]">
            <span className="ml-2 whitespace-nowrap">レンダーエンジン</span>
            <span className="relative block w-[146px]">
              <select className={BLUE + "w-full appearance-none px-[7px] leading-[18px]"} defaultValue="Eevee">
                <option>Eevee</option>
                <option>Workbench</option>
                <option>Cycles</option>
              </select>
              <Chevron className="pointer-events-none absolute top-[6px] right-[3px] text-white" />
            </span>
          </label>
          <div className="mt-[2px] flex flex-col gap-[2px]">
            <Panel title="サンプリング" open>
              <div className="grid grid-cols-[96px_136px] items-center gap-x-[10px] pt-2 pb-[11px] text-right text-[#c6cace]">
                <label htmlFor="smp-r">レンダー</label>
                <input id="smp-r" defaultValue="64" className="h-5 rounded-t-[4px] border border-black bg-[#2a3a47] text-center font-[DejaVu_Sans] text-[#92c3ec] outline-none" />
                <label htmlFor="smp-v">ビューポート</label>
                <input id="smp-v" defaultValue="16" className="h-5 rounded-b-[4px] border border-t-0 border-black bg-[#2a3a47] text-center font-[DejaVu_Sans] text-[#92c3ec] outline-none" />
                <label className="col-start-2 mt-[7px] flex items-center gap-1 whitespace-nowrap text-[#e4e6e8]"><Check id="denoise" label="ビューポートデノイズ" />ビューポートデノイズ</label>
              </div>
            </Panel>
            <Panel title="アンビエントオクルージョン" check />
            <Panel title="ブルーム" check />
            <Panel title="被写界深度" />
            <Panel title="SSS" />
            <Panel title="スクリーンスペース反射" open check>
              <div className="pt-[6px] pb-2">
                <label className="ml-[98px] flex h-[22px] items-center gap-1 text-[#e4e6e8]"><Check id="refr" label="屈折" />屈折</label>
                <label className="ml-[98px] flex h-[22px] items-center gap-1 text-[#e4e6e8]"><Check id="half" label="半解像度トレース" />半解像度トレース</label>
                <Field label="トレースの精度" value="0.250" fill={0.24} />
                <Field label="最大粗さ" value="0.500" fill={0.49} />
                <Field label="幅" value="0.2 m" />
                <Field label="エッジフェード" value="0.075" fill={0.13} />
                <Field label="範囲制限" value="10.000" />
              </div>
            </Panel>
            <Panel title="モーションブラー" check={false} />
            <Panel title="ボリューメトリック" />
            <Panel title="パフォーマンス" />
            <Panel title="カーブ" />
            <Panel title="影" />
            <Panel title="間接照明" />
            <Panel title="フィルム" />
          </div>
        </div>
      </div>
    </section>
  );
}

function StatusBar() {
  const hints: [string, string][] = [["mouseL", "選択"], ["mouseM", "ビューを回転"], ["mouseR", "オブジェクトコンテクストメニュー"]];
  return (
    <footer className="flex h-[19px] shrink-0 items-center justify-between bg-[#343434] pr-[9px] pl-[10px] text-[#b4b4b4]">
      <div className="flex">
        {hints.map(([n, t]) => (
          <span key={n} className="flex min-w-[211px] items-center gap-[9px] whitespace-nowrap"><Icon n={n} className="size-[15px]" />{t}</span>
        ))}
      </div>
      <div className="flex gap-[4px] whitespace-nowrap">
        <span>Collection</span><Bar /><span>Plane</span><Bar /><span>頂点:4</span><Bar /><span>面:1</span><Bar /><span>三角面:2</span><Bar /><span>オブジェクト:1/2</span><Bar /><span>3.3.0</span>
      </div>
    </footer>
  );
}

export default function App() {
  return (
    <div className="flex h-screen flex-col overflow-hidden bg-[#1b1b1b] font-[Open_Sans,Noto_Sans_CJK_JP,sans-serif] text-[11px] leading-4 select-none">
      <TitleBar />
      <TopBar />
      <div className="flex min-h-0 flex-1 gap-[3px] px-[2px]">
        <main className="flex min-w-0 flex-1 flex-col gap-[3px] pb-[2px]">
          <Viewport />
          <Timeline />
        </main>
        <aside className="flex w-[292px] shrink-0 flex-col gap-[3px]">
          <Outliner />
          <Properties />
        </aside>
      </div>
      <StatusBar />
    </div>
  );
}
